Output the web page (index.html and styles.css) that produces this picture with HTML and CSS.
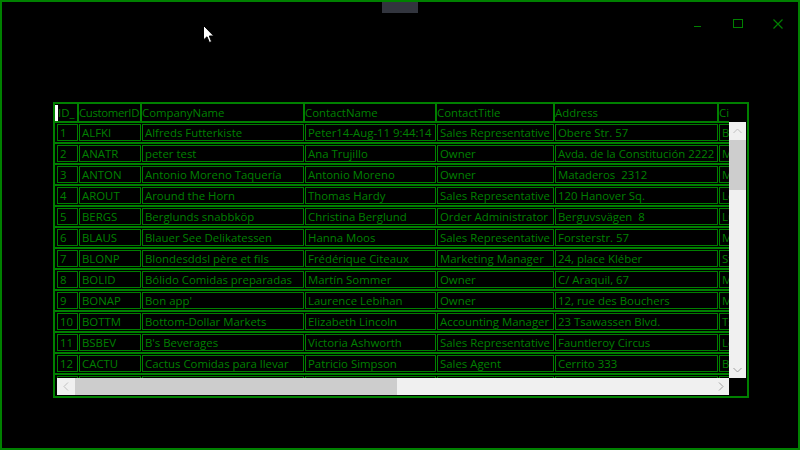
FILE: index.html
```html
<!DOCTYPE html>
<html>
<head>
<meta charset="utf-8">
<link rel="stylesheet" href="styles.css">
</head>
<body>
<div class="win">
  <div class="tab"></div>
  <div class="titlebar">
    <div class="tbtn"><svg width="10" height="10" viewBox="0 0 10 10"><line x1="1" y1="7.5" x2="8" y2="7.5" stroke="#008000" stroke-width="1"/></svg></div>
    <div class="tbtn"><svg width="10" height="10" viewBox="0 0 10 10"><rect x="0.5" y="0.5" width="9" height="8" fill="none" stroke="#008000" stroke-width="1"/></svg></div>
    <div class="tbtn"><svg width="10" height="10" viewBox="0 0 10 10"><path d="M0.5 0.5 L9.5 9.5 M9.5 0.5 L0.5 9.5" stroke="#008000" stroke-width="1.2"/></svg></div>
  </div>
  <div class="grid">
    <div class="main">
      <div class="content">
        <div class="hdr">
          <div class="corner"></div>
          <div class="h w0">ID_</div>
          <div class="h w1 tight">CustomerID</div>
          <div class="h w2">CompanyName</div>
          <div class="h w3">ContactName</div>
          <div class="h w4">ContactTitle</div>
          <div class="h w5">Address</div>
          <div class="h w6">City</div>
        </div>
        <div class="row"><div class="rh"></div><div class="c c0">1</div><div class="c c1">ALFKI</div><div class="c c2">Alfreds Futterkiste</div><div class="c c3">Peter14-Aug-11 9:44:14</div><div class="c c4">Sales Representative</div><div class="c c5">Obere Str. 57</div><div class="c c6">Berlin</div></div>
        <div class="row"><div class="rh"></div><div class="c c0">2</div><div class="c c1">ANATR</div><div class="c c2">peter test</div><div class="c c3">Ana Trujillo</div><div class="c c4">Owner</div><div class="c c5">Avda. de la Constitución 2222</div><div class="c c6">México D.F.</div></div>
        <div class="row"><div class="rh"></div><div class="c c0">3</div><div class="c c1">ANTON</div><div class="c c2">Antonio Moreno Taquería</div><div class="c c3">Antonio Moreno</div><div class="c c4">Owner</div><div class="c c5">Mataderos&nbsp; 2312</div><div class="c c6">México D.F.</div></div>
        <div class="row"><div class="rh"></div><div class="c c0">4</div><div class="c c1">AROUT</div><div class="c c2">Around the Horn</div><div class="c c3">Thomas Hardy</div><div class="c c4">Sales Representative</div><div class="c c5">120 Hanover Sq.</div><div class="c c6">London</div></div>
        <div class="row"><div class="rh"></div><div class="c c0">5</div><div class="c c1">BERGS</div><div class="c c2">Berglunds snabbköp</div><div class="c c3">Christina Berglund</div><div class="c c4">Order Administrator</div><div class="c c5">Berguvsvägen&nbsp; 8</div><div class="c c6">Luleå</div></div>
        <div class="row"><div class="rh"></div><div class="c c0">6</div><div class="c c1">BLAUS</div><div class="c c2">Blauer See Delikatessen</div><div class="c c3">Hanna Moos</div><div class="c c4">Sales Representative</div><div class="c c5">Forsterstr. 57</div><div class="c c6">Mannheim</div></div>
        <div class="row"><div class="rh"></div><div class="c c0">7</div><div class="c c1">BLONP</div><div class="c c2">Blondesddsl père et fils</div><div class="c c3">Frédérique Citeaux</div><div class="c c4">Marketing Manager</div><div class="c c5">24, place Kléber</div><div class="c c6">Strasbourg</div></div>
        <div class="row"><div class="rh"></div><div class="c c0">8</div><div class="c c1">BOLID</div><div class="c c2">Bólido Comidas preparadas</div><div class="c c3">Martín Sommer</div><div class="c c4">Owner</div><div class="c c5">C/ Araquil, 67</div><div class="c c6">Madrid</div></div>
        <div class="row"><div class="rh"></div><div class="c c0">9</div><div class="c c1">BONAP</div><div class="c c2">Bon app'</div><div class="c c3">Laurence Lebihan</div><div class="c c4">Owner</div><div class="c c5">12, rue des Bouchers</div><div class="c c6">Marseille</div></div>
        <div class="row"><div class="rh"></div><div class="c c0">10</div><div class="c c1">BOTTM</div><div class="c c2">Bottom-Dollar Markets</div><div class="c c3">Elizabeth Lincoln</div><div class="c c4">Accounting Manager</div><div class="c c5">23 Tsawassen Blvd.</div><div class="c c6">Tsawassen</div></div>
        <div class="row"><div class="rh"></div><div class="c c0">11</div><div class="c c1">BSBEV</div><div class="c c2">B's Beverages</div><div class="c c3">Victoria Ashworth</div><div class="c c4">Sales Representative</div><div class="c c5">Fauntleroy Circus</div><div class="c c6">London</div></div>
        <div class="row"><div class="rh"></div><div class="c c0">12</div><div class="c c1">CACTU</div><div class="c c2">Cactus Comidas para llevar</div><div class="c c3">Patricio Simpson</div><div class="c c4">Sales Agent</div><div class="c c5">Cerrito 333</div><div class="c c6">Buenos Aires</div></div>
        <div class="row"><div class="rh"></div><div class="c c0">13</div><div class="c c1">CENTC</div><div class="c c2">Centro comercial Moctezuma</div><div class="c c3">Francisco Chang</div><div class="c c4">Marketing Manager</div><div class="c c5">Sierras de Granada 9993</div><div class="c c6">México D.F.</div></div>
      </div>
      <div class="vside">
        <div class="vtop"></div>
        <div class="vscroll">
          <div class="sbtn"><svg width="9" height="6" viewBox="0 0 9 6"><path d="M0.5 5 L4.5 1 L8.5 5" fill="none" stroke="#c0c0c0" stroke-width="1"/></svg></div>
          <div class="vthumb"></div>
          <div class="vtrack"></div>
          <div class="sbtn"><svg width="9" height="6" viewBox="0 0 9 6"><path d="M0.5 1 L4.5 5 L8.5 1" fill="none" stroke="#a0a0a0" stroke-width="1"/></svg></div>
        </div>
      </div>
    </div>
    <div class="hbar">
      <div class="hpad"></div>
      <div class="hscroll">
        <div class="sbtn"><svg width="6" height="9" viewBox="0 0 6 9"><path d="M5 0.5 L1 4.5 L5 8.5" fill="none" stroke="#c0c0c0" stroke-width="1"/></svg></div>
        <div class="hthumb"></div>
        <div class="htrack"></div>
        <div class="sbtn"><svg width="6" height="9" viewBox="0 0 6 9"><path d="M1 0.5 L5 4.5 L1 8.5" fill="none" stroke="#a0a0a0" stroke-width="1"/></svg></div>
      </div>
      <div class="hcorner"></div>
    </div>
  </div>
  <svg class="cursor" width="12" height="19" viewBox="0 0 12 19"><path d="M0.5 0.5 L0.5 15 L4 11.8 L6.4 17.5 L8.6 16.6 L6.3 11 L10.8 11 Z" fill="#fff" stroke="#000" stroke-width="1"/></svg>
</div>
</body>
</html>
```
FILE: styles.css
```css
html, body {
  margin: 0;
  padding: 0;
  background: #000;
}
.win {
  position: relative;
  width: 800px;
  height: 450px;
  box-sizing: border-box;
  border: 2px solid #008000;
  background: #000;
  font-family: "Open Sans", "Noto Sans", sans-serif;
  font-size: 11.4px;
  color: #008000;
  overflow: hidden;
}
.tab {
  position: absolute;
  left: 380px;
  top: -2px;
  width: 36px;
  height: 13px;
  background: #32353e;
}
.titlebar {
  height: 100px;
  display: flex;
  justify-content: flex-end;
  align-items: flex-start;
}
.tbtn {
  width: 40px;
  height: 44px;
  display: flex;
  align-items: center;
  justify-content: center;
}
.grid {
  margin-left: 51px;
  width: 696px;
  height: 296px;
  box-sizing: border-box;
  border: 2px solid #008000;
  background: #000;
  display: flex;
  flex-direction: column;
}
.main {
  height: 274px;
  display: flex;
}
.content {
  width: 674px;
  height: 274px;
  overflow: hidden;
  flex-shrink: 0;
}
.hdr {
  display: flex;
  height: 17px;
  border-bottom: 2px solid #008000;
  margin-bottom: 1px;
}
.corner {
  width: 3px;
  height: 16px;
  margin-top: 1px;
  background: #fff;
  flex-shrink: 0;
}
.h {
  box-sizing: border-box;
  height: 17px;
  line-height: 17px;
  border-right: 2px solid #008000;
  white-space: nowrap;
  overflow: hidden;
  flex-shrink: 0;
}
.tight {
  letter-spacing: -0.35px;
}
.w0 { width: 21px; }
.w1 { width: 63px; }
.w2 { width: 163px; }
.w3 { width: 132px; }
.w4 { width: 118px; }
.w5 { width: 164px; }
.w6 { width: 100px; }
.row {
  display: flex;
  height: 17px;
  padding-bottom: 1px;
  border-bottom: 2px solid #008000;
  margin-bottom: 1px;
}
.rh {
  width: 2px;
  flex-shrink: 0;
}
.c {
  box-sizing: border-box;
  height: 17px;
  border: 1px solid #008000;
  margin-right: 1px;
  padding: 0 2px;
  line-height: 15px;
  white-space: nowrap;
  overflow: hidden;
  flex-shrink: 0;
}
.c0 { width: 21px; }
.c1 { width: 62px; }
.c2 { width: 162px; }
.c3 { width: 131px; }
.c4 { width: 117px; }
.c5 { width: 163px; }
.c6 { width: 100px; }
.vside {
  width: 17px;
  margin-right: 1px;
  display: flex;
  flex-direction: column;
}
.vtop {
  height: 18px;
}
.vscroll {
  height: 256px;
  background: #f0f0f0;
  display: flex;
  flex-direction: column;
}
.sbtn {
  width: 17px;
  height: 17px;
  display: flex;
  align-items: center;
  justify-content: center;
  flex-shrink: 0;
}
.vthumb {
  height: 50px;
  margin-top: 1px;
  background: #cdcdcd;
}
.vtrack {
  flex: 1;
}
.hbar {
  display: flex;
  height: 17px;
}
.hpad {
  width: 2px;
}
.hscroll {
  width: 672px;
  display: flex;
  background: #f0f0f0;
}
.hthumb {
  width: 322px;
  margin-left: 1px;
  background: #cdcdcd;
}
.htrack {
  flex: 1;
}
.hcorner {
  width: 18px;
}
.cursor {
  position: absolute;
  left: 201px;
  top: 23px;
}
```
